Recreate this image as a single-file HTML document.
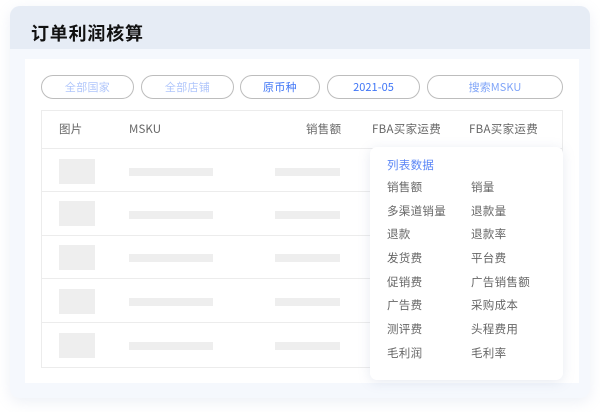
<!DOCTYPE html>
<html lang="zh-CN"><head><meta charset="utf-8">
<style>
html,body{margin:0;padding:0;background:#fff;}
body{width:600px;height:412px;position:relative;overflow:hidden;font-family:"Noto Sans CJK SC","Liberation Sans",sans-serif;}
div{position:absolute;box-sizing:border-box;}
.t{white-space:nowrap;font-size:11.5px;line-height:16px;color:#666;letter-spacing:.3px;font-weight:400;}
.pill{top:75px;height:24px;border:1px solid #bdbdbd;border-radius:12px;background:#fff;text-align:center;font-size:11px;line-height:22px;white-space:nowrap;letter-spacing:.3px;font-weight:400;}
.lt{color:#b0c6fb;}.bl{color:#3f75f6;}.md{color:#80a5f8;}
.hl{left:41px;width:522px;height:1px;background:#ececec;}
.th{left:59px;width:36px;height:25px;background:#eee;}
.b1{left:129px;width:84px;height:8px;background:#eee;}
.b2{left:275px;width:65px;height:8px;background:#eee;}
</style></head><body>
<div style="left:10px;top:6px;width:580px;height:392px;border-radius:10px;background:#f5f8fd;box-shadow:0 4px 14px rgba(140,160,200,.16);"></div>
<div style="left:10px;top:6px;width:580px;height:43px;border-radius:10px 10px 0 0;background:#e6ecf5;"></div>
<div class="t" style="left:31px;top:21px;font-size:18px;line-height:24px;font-weight:700;color:#111;letter-spacing:.8px;">订单利润核算</div>
<div style="left:25px;top:59px;width:554px;height:324px;background:#fff;"></div>

<div class="pill lt" style="left:41px;width:93px;">全部国家</div>
<div class="pill lt" style="left:141px;width:93px;">全部店铺</div>
<div class="pill bl" style="left:240px;width:80px;">原币种</div>
<div class="pill bl" style="left:327px;width:93px;letter-spacing:.05px;">2021-05</div>
<div class="pill md" style="left:427px;width:136px;letter-spacing:.05px;">搜索MSKU</div>

<div style="left:41px;top:110px;width:522px;height:258px;border:1px solid #ececec;"></div>
<div class="hl" style="top:148px;"></div>
<div class="hl" style="top:191px;"></div>
<div class="hl" style="top:235px;"></div>
<div class="hl" style="top:278px;"></div>
<div class="hl" style="top:322px;"></div>

<div class="t" style="left:59px;top:121px;">图片</div>
<div class="t" style="left:129px;top:121px;letter-spacing:.1px;">MSKU</div>
<div class="t" style="left:306px;top:121px;">销售额</div>
<div class="t" style="left:372px;top:121px;">FBA买家运费</div>
<div class="t" style="left:469px;top:121px;">FBA买家运费</div>

<div class="th" style="top:159px;"></div><div class="b1" style="top:168px;"></div><div class="b2" style="top:168px;"></div>
<div class="th" style="top:201px;"></div><div class="b1" style="top:211px;"></div><div class="b2" style="top:211px;"></div>
<div class="th" style="top:245px;"></div><div class="b1" style="top:254px;"></div><div class="b2" style="top:254px;"></div>
<div class="th" style="top:289px;"></div><div class="b1" style="top:298px;"></div><div class="b2" style="top:298px;"></div>
<div class="th" style="top:333px;"></div><div class="b1" style="top:342px;"></div><div class="b2" style="top:342px;"></div>

<div style="left:370px;top:147px;width:193px;height:233px;background:#fff;border-radius:7px;box-shadow:0 2px 12px rgba(120,140,180,.18);"></div>
<div class="t" style="left:387px;top:157px;color:#5b86f6;">列表数据</div>
<div class="t" style="left:387px;top:179px;">销售额</div><div class="t" style="left:471px;top:179px;">销量</div>
<div class="t" style="left:387px;top:203px;">多渠道销量</div><div class="t" style="left:471px;top:203px;">退款量</div>
<div class="t" style="left:387px;top:226px;">退款</div><div class="t" style="left:471px;top:226px;">退款率</div>
<div class="t" style="left:387px;top:250px;">发货费</div><div class="t" style="left:471px;top:250px;">平台费</div>
<div class="t" style="left:387px;top:274px;">促销费</div><div class="t" style="left:471px;top:274px;">广告销售额</div>
<div class="t" style="left:387px;top:297px;">广告费</div><div class="t" style="left:471px;top:297px;">采购成本</div>
<div class="t" style="left:387px;top:321px;">测评费</div><div class="t" style="left:471px;top:321px;">头程费用</div>
<div class="t" style="left:387px;top:345px;">毛利润</div><div class="t" style="left:471px;top:345px;">毛利率</div>
</body></html>
